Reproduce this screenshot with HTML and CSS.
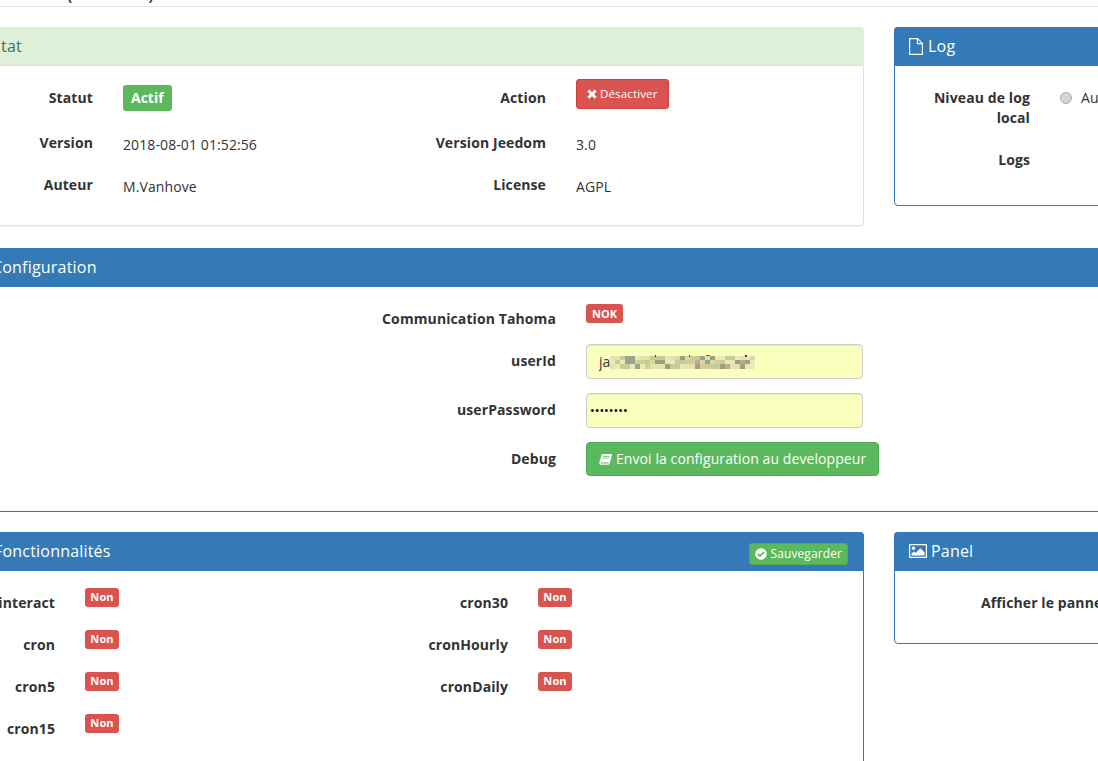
FILE: index.html
```html
<!DOCTYPE html>
<html lang="fr">
<head>
<meta charset="utf-8">
<title>Tahoma</title>
<link rel="stylesheet" href="styles.css">
</head>
<body>
<div class="page">
  <div class="topbar"><span class="top-title">Tahoma (tahoma)</span></div>

  <div class="split first">
    <section class="panel panel-success main">
      <header class="panel-heading heading-etat"><h3>État</h3></header>
      <div class="kv-grid info">
        <div class="label r1">Statut</div>
        <div class="value r1"><span class="status">Actif</span></div>
        <div class="label r1">Action</div>
        <div class="value r1">
          <a class="btn btn-red">
            <svg class="ico-times" viewBox="0 0 10 10"><path d="M2.400.6 5 3.200 7.600.6 9.600 2.600 7 5.200 9.600 7.800 7.600 9.800 5 7.200 2.400 9.800.4 7.800 3 5.200.4 2.600z"/></svg>
            Désactiver
          </a>
        </div>
        <div class="label">Version</div>
        <div class="value text">2018-08-01 01:52:56</div>
        <div class="label">Version Jeedom</div>
        <div class="value text">3.0</div>
        <div class="label">Auteur</div>
        <div class="value text">M.Vanhove</div>
        <div class="label">License</div>
        <div class="value text">AGPL</div>
      </div>
    </section>

    <section class="panel side log">
      <header class="panel-heading">
        <h3>
          <svg class="ico-file" viewBox="0 0 14 17"><path d="M1 .6h7.600L13.400 5.400V16.400H.6V.6z M8.400.8V5.600H13.200" fill="none" stroke="#fff" stroke-width="1.200"/></svg>
          Log
        </h3>
      </header>
      <div class="side-body">
        <div class="side-label two">Niveau de log local</div>
        <div class="side-value"><span class="radio"></span><span>Automatique</span></div>
        <div class="side-label">Logs</div>
        <div></div>
      </div>
    </section>
  </div>

  <section class="panel config">
    <header class="panel-heading heading-config"><h3>Configuration</h3></header>
    <div class="config-body">
      <div class="label">Communication Tahoma</div>
      <div class="control"><span class="nok">NOK</span></div>
      <div class="label">userId</div>
      <div class="control field">
        <input class="input input-id" type="text" value="ja" aria-label="userId">
        <svg class="mosaic" viewBox="0 0 145 15" aria-hidden="true">
          <path fill="#d6d9a8" d="M0 1h145v13H0z"/>
          <path fill="#e0e3ae" d="M0 1h10v4H0z M30 1h10v4H30z M60 1h5v4H60z M95 1h5v4H95z M130 1h5v4H130z M0 9h5v5H0z M40 9h15v5H40z M75 9h10v5H75z M120 9h10v5H120z"/>
          <path fill="#c6cb9c" d="M10 1h5v4H10z M40 1h15v4H40z M80 1h10v4H80z M115 1h10v4H115z M5 5h5v4H5z M35 5h5v4H35z M65 5h10v4H65z M110 5h5v4H110z M10 9h10v5H10z M60 9h10v5H60z M100 9h10v5H100z"/>
          <path fill="#96a68e" d="M15 1h10v4H15z M90 1h5v4H90z M15 5h10v4H15z M95 5h5v4H95z M135 5h5v4H135z M25 9h5v5H25z M85 9h5v5H85z"/>
          <path fill="#a09c7c" d="M45 5h10v4H45z M70 1h5v4H70z M100 1h5v4H100z M125 5h5v4H125z M55 9h5v5H55z M110 9h5v5H110z M130 9h5v5H130z"/>
          <path fill="#d8cb92" d="M25 5h10v4H25z M75 5h10v4H75z M105 5h5v4H105z M90 9h10v5H90z M35 9h5v5H35z"/>
          <path fill="#cca786" d="M130 5h5v4H130z M115 9h5v5H115z M85 5h5v4H85z"/>
          <path fill="#e8ebb6" d="M25 1h5v4H25z M55 1h5v4H55z M0 5h5v4H0z M10 5h5v4H10z M55 5h10v4H55z M135 1h5v4H135z M5 9h5v5H5z M135 9h10v5H135z M140 5h5v4H140z M105 1h10v4H105z M125 1h5v4H125z M115 5h10v4H115z M20 9h5v5H20z M30 9h5v5H30z M70 9h5v5H70z"/>
          <path fill="#33404a" d="M45 0h1v2h-1z M79 0h1v2h-1z M135 0h2v2h-2z"/>
          <path fill="#b04030" d="M96 0h4v1h-4z"/>
        </svg>
      </div>
      <div class="label">userPassword</div>
      <div class="control"><input class="input input-pass" type="password" value="12345678" aria-label="userPassword"></div>
      <div class="label">Debug</div>
      <div class="control">
        <a class="btn btn-green">
          <svg class="ico-book" viewBox="0 0 14 14"><path fill="#fff" d="M3.600 1h9.600c.7 0 1 .6.8 1.200L11.600 11c-.3 1-1 1.600-2 1.600H2.200C1 12.600.2 11.500.3 10.300L.4 9.700 3 1.600c.1-.4.300-.6.600-.6zM4.500 3.300l-.2.700h6.900l.2-.7zM3.900 5.200l-.2.7h6.900l.2-.7zM2.300 11.400h7.500c.4 0 .6-.2.7-.6l.2-.6H2.700c-.7 0-1 .3-1 .7 0 .3.200.5.600.5z"/></svg>
          Envoi la configuration au developpeur
        </a>
      </div>
    </div>
  </section>

  <div class="split">
    <section class="panel main features">
      <header class="panel-heading heading-features">
        <h3>Fonctionnalités</h3>
        <a class="btn btn-save">
          <svg class="ico-check" viewBox="0 0 12 12"><path fill="#fff" fill-rule="evenodd" d="M6 .2a5.800 5.800 0 1 0 0 11.600A5.800 5.800 0 0 0 6 .2zM5 9.200 2.300 6.500l1.200-1.200L5 6.800l3.500-3.500 1.200 1.200z"/></svg>
          Sauvegarder
        </a>
      </header>
      <div class="kv-grid features-grid">
        <div class="label">interact</div><div class="value"><span class="non">Non</span></div>
        <div class="label">cron30</div><div class="value"><span class="non">Non</span></div>
        <div class="label">cron</div><div class="value"><span class="non">Non</span></div>
        <div class="label">cronHourly</div><div class="value"><span class="non">Non</span></div>
        <div class="label">cron5</div><div class="value"><span class="non">Non</span></div>
        <div class="label">cronDaily</div><div class="value"><span class="non">Non</span></div>
        <div class="label">cron15</div><div class="value"><span class="non">Non</span></div>
      </div>
    </section>

    <section class="panel side panel-panel">
      <header class="panel-heading">
        <h3>
          <svg class="ico-picture" viewBox="0 0 18 14"><path fill="#fff" fill-rule="evenodd" d="M1 0h16c.6 0 1 .4 1 1v12c0 .6-.4 1-1 1H1c-.6 0-1-.4-1-1V1c0-.6.4-1 1-1zm.2 1.200v11.600h15.600V1.200zM4.500 2.500a1.800 1.800 0 1 1 0 3.600 1.800 1.800 0 0 1 0-3.600zM2.400 11.600V9.800l2.500-2.400 1.700 1.600 4.700-4.700 4.300 4.300v3z"/></svg>
          Panel
        </h3>
      </header>
      <div class="panel-body-simple"><div class="label wide">Afficher le panneau desktop</div></div>
    </section>
  </div>
</div>
</body>
</html>
```

FILE: styles.css
```css
* { box-sizing: border-box; }
html, body { margin: 0; padding: 0; height: 100%; overflow: hidden; background: #fff; }
body { font-family: "Open Sans", "Liberation Sans", sans-serif; font-size: 14px; line-height: 20px; color: #333; letter-spacing: .1px; }
.page { width: 1300px; margin-left: -30px; }

.topbar { height: 7px; border-bottom: 1px solid #e5e5e5; overflow: hidden; padding-left: 12px; }
.top-title { display: block; margin-top: -20px; font-size: 21px; line-height: 24px; white-space: nowrap; letter-spacing: 0; margin-left: -1px; }

.split { display: flex; gap: 30px; align-items: flex-start; }
.split.first { margin-top: 20px; margin-bottom: 22px; }
.split:last-child { margin-top: 20px; }

.panel { border: 1px solid #337ab7; border-radius: 4px; background: #fff; flex: none; }
.main { width: 894px; }
.side { width: 380px; }
.panel-heading { height: 39px; margin: -1px -1px 0; padding: 0 15px 1px; background: #337ab7; color: #fff; border-radius: 4px 4px 0 0; display: flex; align-items: center; justify-content: space-between; }
.panel-heading h3 { margin: 0; font-size: 16px; font-weight: 400; line-height: 18px; display: flex; align-items: center; gap: 4px; letter-spacing: .2px; }

.panel-success { border-color: #d6e9c6; box-shadow: 0 1px 1px rgba(0, 0, 0, .05); height: 199px; }
.panel-success .panel-heading { background: #dff0d8; color: #3c7360; border-bottom: 1px solid #d6e9c6; padding-bottom: 0; }
.heading-etat { padding-left: 22px; }
.heading-config { padding-left: 22px; }
.heading-features { padding-left: 24px; }

.kv-grid { display: grid; grid-template-columns: 122px 243px 150px 1fr; column-gap: 30px; grid-auto-rows: 42px; padding: 15px 0; }
.kv-grid .r1 { height: 45px; }
.info { grid-template-rows: 45px 42px 42px; }
.label { font-weight: 700; text-align: right; padding-top: 7px; }
.value.text { padding-top: 9px; }
.status { display: inline-block; height: 26px; margin-top: 4px; padding: 0 8px; background: #5cb85c; color: #fff; font-weight: 700; line-height: 26px; border-radius: 3px; letter-spacing: 0; }

.btn { display: inline-flex; align-items: center; color: #fff; border-radius: 3px; white-space: nowrap; }
.btn-red { height: 30px; margin-top: -2px; padding: 0 10px; gap: 3px; background: #d9534f; border: 1px solid #d43f3a; font-size: 11.600px; }
.ico-times { width: 10px; height: 10px; fill: #fff; }
.btn-green { height: 34px; padding: 0 12px; gap: 4px; background: #5cb85c; border: 1px solid #4cae4c; border-radius: 4px; letter-spacing: .08px; }
.btn-save { height: 22px; padding: 0 5px; gap: 3px; background: #5cb85c; border: 1px solid #4cae4c; font-size: 12px; line-height: 18px; margin-top: 1px; }
.ico-book { width: 13px; height: 13px; }
.ico-check { width: 12px; height: 12px; }
.ico-file { width: 14px; height: 17px; margin-right: 1px; }
.ico-picture { width: 18px; height: 14px; }

.log { height: 179px; }
.side-body { display: grid; grid-template-columns: 120px 1fr; column-gap: 30px; grid-template-rows: 62px 47px; padding: 15px 0 0 15px; }
.side-label { font-weight: 700; text-align: right; padding-top: 7px; }
.side-value { display: flex; align-items: center; gap: 9px; height: 20px; margin-top: 7px; white-space: nowrap; }
.radio { width: 12px; height: 12px; border-radius: 50%; background: #d5d5d5; border: 1px solid #aaa; }

.config { border-width: 0 0 1px; border-radius: 0; margin-right: -100px; }
.config .panel-heading { margin: 0; border-radius: 0; }
.config-body { display: grid; grid-template-columns: 586px 1fr; column-gap: 30px; grid-template-rows: 42px 49px 49px 54px; padding: 15px 0 15px; }
.nok { display: inline-block; height: 19px; margin-top: 2px; padding: 0 6px; background: #d9534f; color: #fff; font-size: 11px; font-weight: 700; line-height: 19px; border-radius: 3px; letter-spacing: 0; }
.field { position: relative; width: 277px; }
.input { display: block; width: 277px; height: 35px; border: 1px solid #ccc; border-radius: 4px; background: #faffbd; box-shadow: inset 0 1px 1px rgba(0, 0, 0, .075); color: #333; font-family: inherit; font-size: 14px; }
.input-id { padding: 0 12px; }
.input-pass { padding: 0 3px; color: #000; font-size: 12.500px; }
.mosaic { position: absolute; left: 24px; top: 11px; width: 145px; height: 15px; }

.features { height: 400px; }
.heading-features { align-items: flex-start; padding-right: 16px; padding-top: 10px; padding-bottom: 0; }
.features-grid { grid-template-columns: 84px 243px 150px 1fr; padding-top: 15px; }
.non { display: inline-block; height: 19px; width: 34px; margin-top: 2px; text-align: center; background: #d9534f; color: #fff; font-size: 11px; font-weight: 700; line-height: 18px; border-radius: 3px; letter-spacing: .1px; }

.panel-panel { height: 112px; }
.panel-body-simple { padding: 15px 0 0 86px; }
.wide { white-space: nowrap; text-align: left; }
```
